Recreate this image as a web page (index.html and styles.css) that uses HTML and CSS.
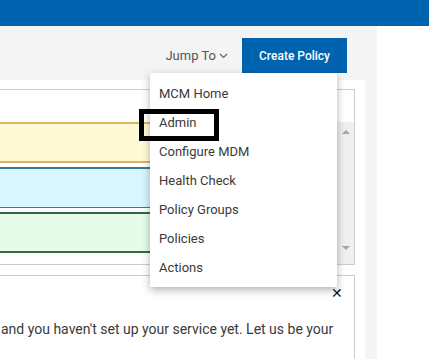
FILE: index.html
```html
<!DOCTYPE html>
<html lang="en">
<head>
    <meta charset="UTF-8">
    <meta name="viewport" content="width=device-width, initial-scale=1.0">
    <title>Policies</title>
    <link rel="stylesheet" href="styles.css">
</head>
<body>
    <div class="topbar"></div>
    <div class="page">
        <div class="main">
            <div class="toolbar">
                <span class="jump">Jump To
                    <svg width="9" height="6" viewBox="0 0 9 6"><path d="M1 1l3.5 3.5L8 1" fill="none" stroke="#666" stroke-width="1.2"/></svg>
                </span>
                <button class="create">Create Policy</button>
            </div>
            <div class="panel">
                <div class="list">
                    <div class="list-head"></div>
                    <div class="list-body">
                        <div class="rows">
                            <div class="row yellow"></div>
                            <div class="row blue"></div>
                            <div class="row green"></div>
                        </div>
                        <div class="scrollbar">
                            <span class="arrow up"></span>
                            <span class="arrow down"></span>
                        </div>
                    </div>
                </div>
                <div class="notice">
                    <span class="close">&#x2715;</span>
                    <p>and you haven't set up your service yet. Let us be your</p>
                </div>
            </div>
        </div>
        <div class="side"></div>
    </div>

    <ul class="menu">
        <li>MCM Home</li>
        <li>Admin</li>
        <li>Configure MDM</li>
        <li>Health Check</li>
        <li>Policy Groups</li>
        <li>Policies</li>
        <li>Actions</li>
    </ul>
    <div class="highlight"></div>
</body>
</html>
```

FILE: styles.css
```css
body {
    margin: 0;
    font-family: Roboto, "Liberation Sans", sans-serif;
    color: #333;
    background: #fff;
    overflow: hidden;
}
.topbar {
    height: 26px;
    background: #0063af;
}
.page {
    display: flex;
}
.main {
    width: 377px;
    background: #f4f4f4;
    height: 333px;
}
.toolbar {
    display: flex;
    justify-content: flex-end;
    align-items: center;
    padding: 12px 30px 0 0;
    height: 35px;
    margin-bottom: 7px;
}
.jump {
    font-size: 13px;
    color: #555;
    margin-right: 14px;
    display: flex;
    align-items: center;
    gap: 3px;
}
.create {
    width: 105px;
    height: 35px;
    border: none;
    background: #0063af;
    color: #fff;
    font-family: Roboto, "Liberation Sans", sans-serif;
    font-size: 12px;
    font-weight: 500;
    padding: 0;
}
.panel {
    width: 365px;
    background: #fff;
    height: 279px;
    padding-top: 9px;
    box-sizing: border-box;
}
.list {
    width: 356px;
    margin-left: -1px;
    border: 1px solid #ccc;
    height: 176px;
    box-sizing: border-box;
}
.list-head {
    height: 32px;
}
.list-body {
    display: flex;
    height: 142px;
}
.rows {
    flex: 1;
}
.row {
    height: 41px;
    box-sizing: border-box;
    margin-bottom: 4px;
}
.yellow {
    background: #fff9d6;
    border-top: 2px solid #d5b75f;
    border-bottom: 2px solid #d5b75f;
}
.blue {
    background: #d8f6fd;
    border-top: 2px solid #3a7a8e;
    border-bottom: 1px solid #3a7a8e;
}
.green {
    background: #e6fce9;
    border-top: 2px solid #2f6a45;
    border-bottom: 2px solid #2f6a45;
}
.scrollbar {
    width: 17px;
    background: #efefef;
    display: flex;
    flex-direction: column;
    justify-content: space-between;
    align-items: center;
    padding: 8px 0 14px;
    box-sizing: border-box;
}
.arrow {
    width: 0;
    height: 0;
    border-left: 4px solid transparent;
    border-right: 4px solid transparent;
}
.up {
    border-bottom: 4px solid #a5a5a5;
}
.down {
    border-top: 4px solid #a5a5a5;
}
.notice {
    margin-top: 10px;
    margin-left: -1px;
    width: 356px;
    border: 1px solid #ccc;
    border-bottom: none;
    height: 90px;
    box-sizing: border-box;
    position: relative;
}
.close {
    position: absolute;
    right: 11px;
    top: 9px;
    font-size: 14px;
    color: #111;
}
.notice p {
    margin: 45px 0 0 1px;
    font-size: 14px;
    color: #3a3a3a;
    white-space: nowrap;
}
.side {
    flex: 1;
}
.menu {
    position: absolute;
    left: 150px;
    top: 73px;
    width: 187px;
    margin: 0;
    padding: 6px 0 5px;
    list-style: none;
    background: #fff;
    box-shadow: 0 3px 8px rgba(0, 0, 0, 0.3);
}
.menu li {
    height: 29px;
    line-height: 29px;
    padding-left: 9px;
    font-size: 13px;
    color: #3a3a3a;
}
.highlight {
    position: absolute;
    left: 139px;
    top: 109px;
    width: 80px;
    height: 32px;
    border: 5px solid #000;
    box-sizing: border-box;
}
```
